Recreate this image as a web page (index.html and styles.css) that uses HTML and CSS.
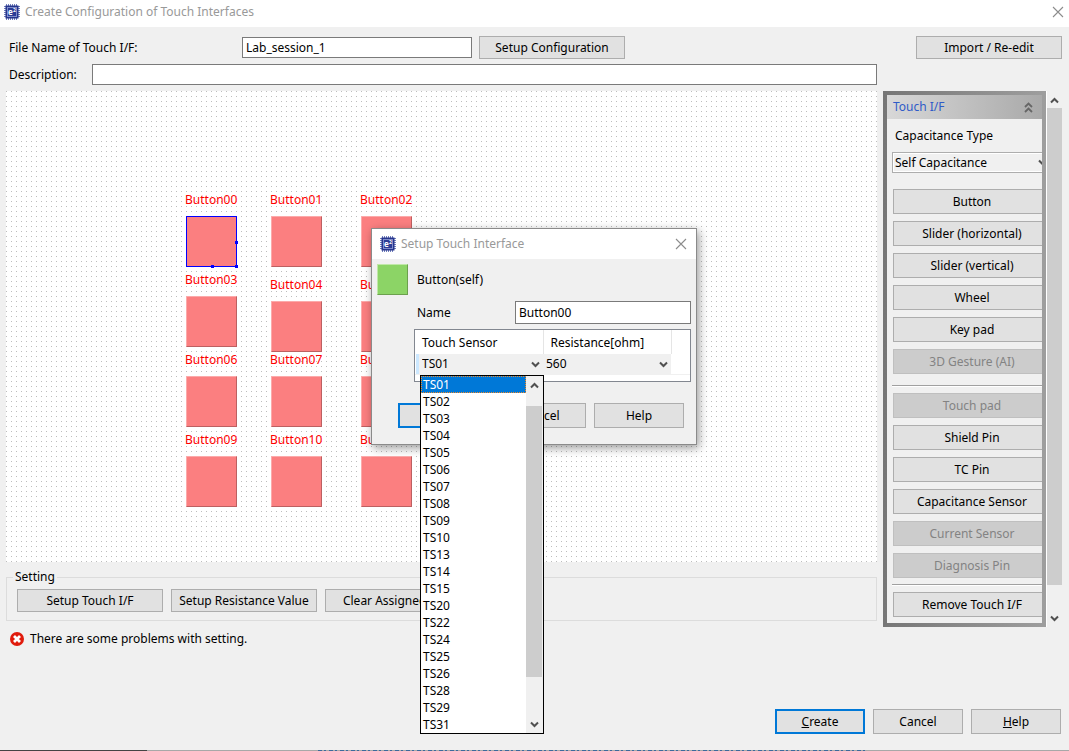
FILE: index.html
```html
<!DOCTYPE html>
<html lang="en">
<head>
<meta charset="utf-8">
<title>Create Configuration of Touch Interfaces</title>
<link rel="stylesheet" href="styles.css">
</head>
<body>
<svg class="defs" width="0" height="0" aria-hidden="true">
  <symbol id="close" viewBox="0 0 12 12"><path d="M1 1l10 10M11 1L1 11" fill="none" stroke="#8c8c8c" stroke-width="1.1"/></symbol>
  <symbol id="down" viewBox="0 0 9 7"><path d="M1 1.5l3.5 3.5L8 1.5" fill="none" stroke="#505050" stroke-width="2"/></symbol>
  <symbol id="up" viewBox="0 0 9 7"><path d="M1 5.5L4.5 2L8 5.5" fill="none" stroke="#505050" stroke-width="2"/></symbol>
</svg>

<header class="titlebar">
  <svg class="chip" viewBox="0 0 16 16" aria-hidden="true">
    <path d="M2.5 0v16M4.5 0v16M6.5 0v16M8.5 0v16M10.5 0v16M12.5 0v16M0 2.5h16M0 4.5h16M0 6.5h16M0 8.5h16M0 10.5h16M0 12.5h16" stroke="#6f7dbb"/>
    <rect x="1.5" y="1.5" width="13" height="13" fill="#26358c"/>
    <rect x="3.5" y="3.5" width="9" height="9" fill="#2c3c96" stroke="#7f8ccb"/>
    <text x="4" y="11" font-size="8">e</text>
    <text x="9" y="8" font-size="5">2</text>
  </svg>
  <h1 class="title">Create Configuration of Touch Interfaces</h1>
  <button class="close" aria-label="Close"><svg><use href="#close"/></svg></button>
</header>

<main class="window">
  <div class="row">
    <label class="file-label" for="file">File Name of Touch I/F:</label>
    <input class="field file" id="file" value="Lab_session_1">
    <button class="btn wide">Setup Configuration</button>
    <button class="btn wide push">Import / Re-edit</button>
  </div>
  <div class="row desc-row">
    <label class="desc-label" for="desc">Description:</label>
    <input class="field desc" id="desc">
  </div>

  <div class="work">
    <div class="left">
      <section class="canvas" aria-label="Layout">
        <div class="node c1 r1"><span>Button00</span><div class="pad selected"><i class="h-right"></i><i class="h-bottom"></i><i class="h-corner"></i></div></div>
        <div class="node c2 r1"><span>Button01</span><div class="pad"></div></div>
        <div class="node c3 r1"><span>Button02</span><div class="pad"></div></div>
        <div class="node c1 r2"><span>Button03</span><div class="pad"></div></div>
        <div class="node c2 r2 lower"><span>Button04</span><div class="pad"></div></div>
        <div class="node c3 r2 lower"><span>Button05</span><div class="pad"></div></div>
        <div class="node c1 r3"><span>Button06</span><div class="pad"></div></div>
        <div class="node c2 r3"><span>Button07</span><div class="pad"></div></div>
        <div class="node c3 r3"><span>Button08</span><div class="pad"></div></div>
        <div class="node c1 r4"><span>Button09</span><div class="pad"></div></div>
        <div class="node c2 r4"><span>Button10</span><div class="pad"></div></div>
        <div class="node c3 r4"><span>Button11</span><div class="pad"></div></div>
      </section>
      <fieldset class="setting">
        <legend>Setting</legend>
        <button class="btn wide">Setup Touch I/F</button>
        <button class="btn wide">Setup Resistance Value</button>
        <button class="btn wide">Clear Assigned Pins</button>
      </fieldset>
      <p class="problem">
        <svg viewBox="0 0 14 14"><circle cx="7" cy="7" r="7" fill="#e01b0c"/><path d="M4 4l6 6M10 4l-6 6" stroke="#fff" stroke-width="2.8"/></svg>
        There are some problems with setting.
      </p>
    </div>

    <div class="side">
      <aside class="palette">
        <div class="palette-in">
          <h2 class="palette-head">Touch I/F
            <svg viewBox="0 0 9 11"><path d="M1 5l3.5-3.5L8 5M1 10l3.5-3.5L8 10" fill="none" stroke="#666" stroke-width="1.8"/></svg>
          </h2>
          <div class="palette-body">
            <label for="cap">Capacitance Type</label>
            <div class="combo cap"><select id="cap"><option>Self Capacitance</option></select><svg><use href="#down"/></svg></div>
            <div class="group">
              <button class="btn">Button</button>
              <button class="btn">Slider (horizontal)</button>
              <button class="btn">Slider (vertical)</button>
              <button class="btn">Wheel</button>
              <button class="btn">Key pad</button>
              <button class="btn" disabled>3D Gesture (AI)</button>
            </div>
            <hr>
            <div class="group">
              <button class="btn" disabled>Touch pad</button>
              <button class="btn">Shield Pin</button>
              <button class="btn">TC Pin</button>
              <button class="btn">Capacitance Sensor</button>
              <button class="btn" disabled>Current Sensor</button>
              <button class="btn" disabled>Diagnosis Pin</button>
            </div>
            <hr class="tight">
            <div class="group"><button class="btn">Remove Touch I/F</button></div>
          </div>
        </div>
      </aside>
      <div class="scroll main-scroll">
        <svg><use href="#up"/></svg>
        <div class="thumb"></div>
        <svg><use href="#down"/></svg>
      </div>
    </div>
  </div>

  <footer class="actions">
    <button class="btn std primary"><u>C</u>reate</button>
    <button class="btn std">Cancel</button>
    <button class="btn std"><u>H</u>elp</button>
  </footer>
</main>
<div class="edge"><div class="edge-dark"></div><div class="edge-code"></div></div>

<section class="dialog" role="dialog" aria-labelledby="dlg-title">
  <header class="dlg-bar">
    <svg class="chip" viewBox="0 0 16 16" aria-hidden="true">
      <path d="M2.5 0v16M4.5 0v16M6.5 0v16M8.5 0v16M10.5 0v16M12.5 0v16M0 2.5h16M0 4.5h16M0 6.5h16M0 8.5h16M0 10.5h16M0 12.5h16" stroke="#6f7dbb"/>
      <rect x="1.5" y="1.5" width="13" height="13" fill="#26358c"/>
      <rect x="3.5" y="3.5" width="9" height="9" fill="#2c3c96" stroke="#7f8ccb"/>
      <text x="4" y="11" font-size="8">e</text>
      <text x="9" y="8" font-size="5">2</text>
    </svg>
    <h2 class="title" id="dlg-title">Setup Touch Interface</h2>
    <button class="close" aria-label="Close dialog"><svg><use href="#close"/></svg></button>
  </header>
  <div class="dlg-kind"><div class="swatch"></div>Button(self)</div>
  <div class="dlg-form">
    <div class="dlg-name"><label for="name">Name</label><input class="field" id="name" value="Button00"></div>
    <div class="grid-box">
      <table>
        <thead><tr><th>Touch Sensor</th><th>Resistance[ohm]</th><th></th></tr></thead>
        <tbody><tr>
          <td class="sensor"><div class="combo flat"><select aria-label="Touch Sensor"><option>TS01</option></select><svg><use href="#down"/></svg></div></td>
          <td><div class="combo flat"><select aria-label="Resistance"><option>560</option></select><svg><use href="#down"/></svg></div></td>
          <td></td>
        </tr></tbody>
      </table>
    </div>
  </div>
  <div class="dlg-actions">
    <button class="btn std primary">OK</button>
    <button class="btn std">Cancel</button>
    <button class="btn std">Help</button>
  </div>
  <div class="popup">
    <ul role="listbox" aria-label="Touch Sensor">
      <li role="option" aria-selected="true">TS01</li>
      <li role="option">TS02</li><li role="option">TS03</li><li role="option">TS04</li>
      <li role="option">TS05</li><li role="option">TS06</li><li role="option">TS07</li>
      <li role="option">TS08</li><li role="option">TS09</li><li role="option">TS10</li>
      <li role="option">TS13</li><li role="option">TS14</li><li role="option">TS15</li>
      <li role="option">TS20</li><li role="option">TS22</li><li role="option">TS24</li>
      <li role="option">TS25</li><li role="option">TS26</li><li role="option">TS28</li>
      <li role="option">TS29</li><li role="option">TS31</li>
    </ul>
    <div class="scroll list-scroll">
      <svg><use href="#up"/></svg>
      <div class="thumb"></div>
      <svg><use href="#down"/></svg>
    </div>
  </div>
</section>
</body>
</html>
```
FILE: styles.css
```css
* { box-sizing: border-box; }
body {
  margin: 0;
  min-height: 100vh;
  display: flex;
  flex-direction: column;
  position: relative;
  background: #f0f0f0;
  color: #000;
  font: 12px/16px "Noto Sans", sans-serif;
}
button, input, select { font: inherit; color: inherit; border-radius: 0; margin: 0; }
h1, h2, p, ul { margin: 0; padding: 0; font: inherit; }
.defs { position: absolute; }

.titlebar { display: flex; align-items: center; height: 27px; padding: 0 5px 4px 4px; background: #fff; }
.chip { width: 16px; height: 16px; flex: none; }
.chip text { fill: #fff; font-family: "Open Sans", sans-serif; font-weight: 700; }
.title { flex: 1; margin-left: 5px; color: #999; }
.close { display: flex; padding: 0; border: 0; background: none; }
.close svg { width: 12px; height: 12px; }

.window { flex: 1; display: flex; flex-direction: column; padding: 9px 7px 0 6px; }
.row { display: flex; align-items: center; height: 23px; padding-left: 3px; }
.file-label { width: 233px; }
.field { height: 21px; min-width: 0; padding: 0 3px; border: 1px solid #7a7a7a; background: #fff; }
.file { width: 230px; margin-right: 7px; }
.btn { height: 23px; padding: 0; border: 1px solid #adadad; background: #e1e1e1; text-align: center; white-space: nowrap; }
.btn:disabled { background: #ccc; border-color: #bfbfbf; color: #838383; }
.wide { width: 146px; }
.push { margin-left: auto; }
.desc-row { margin-top: 4px; padding-right: 185px; }
.desc-label { width: 83px; }
.desc { flex: 1; }

.work { display: flex; align-items: flex-start; margin-top: 5px; }
.left { flex: 1; min-width: 0; }
.canvas {
  position: relative;
  height: 471px;
  background: conic-gradient(from 270deg at 1px 1px, #bdbdbd 90deg, #fff 0) 0 0 / 5px 5px;
}
.node { position: absolute; width: 51px; color: #f00; }
.node span { display: block; height: 24px; margin-left: -1px; }
.c1 { left: 180px; }
.c2 { left: 265px; }
.c3 { left: 355px; }
.r1 { top: 101px; }
.r2 { top: 181px; }
.r2.lower { top: 186px; }
.r3 { top: 261px; }
.r4 { top: 341px; }
.pad { position: relative; height: 51px; background: #fb7f80; border: 1px solid; border-color: #fcaaaa #bc6061 #bc6061 #fcaaaa; }
.pad.selected { border-color: #00f; }
.pad i { position: absolute; width: 3px; height: 3px; background: #00f; }
.h-right { right: -2px; top: 24px; }
.h-bottom { bottom: -2px; left: 24px; }
.h-corner { right: -2px; bottom: -2px; }

.setting { display: flex; gap: 8px; height: 52px; margin: 7px 0 0; padding: 4px 10px; border: 1px solid #dcdcdc; min-width: 0; }
.setting legend { padding: 0 2px; margin-left: -4px; }
.problem { display: flex; align-items: center; gap: 6px; margin-top: 10px; padding-left: 4px; }
.problem svg { width: 14px; height: 14px; }

.side { display: flex; margin-left: 6px; }
.palette { width: 163px; padding: 4px; background: linear-gradient(90deg, #767676, #9e9e9e); }
.palette-in { overflow: hidden; background: #f0f0f0; }
.palette-head {
  display: flex; align-items: center; justify-content: space-between;
  height: 24px; padding: 0 9px 0 6px;
  color: #2f5bc8; background: linear-gradient(90deg, #d8d8d8, #a9a9a9);
}
.palette-head svg { width: 9px; height: 11px; }
.palette-body { width: 165px; padding: 9px 1px 6px 5px; }
.palette-body label { display: block; padding-left: 3px; }
.combo { position: relative; display: flex; align-items: center; }
.combo select { appearance: none; width: 100%; border: 0; background: none; padding: 0 2px; outline: 0; }
.combo svg { position: absolute; right: 3px; width: 9px; height: 7px; pointer-events: none; }
.cap { height: 21px; margin-top: 8px; border: 1px solid #adadad; box-shadow: inset 0 0 0 1px #fff; }
.group { display: flex; flex-direction: column; gap: 7px; padding-left: 1px; }
.cap + .group { margin-top: 16px; }
.group .btn { height: 25px; }
hr { height: 2px; margin: 11px 0 6px; border: 0; border-top: 1px solid #a0a0a0; border-bottom: 1px solid #fff; }
hr.tight { margin-top: 6px; }

.scroll { display: flex; flex-direction: column; align-items: center; background: #f0f0f0; }
.scroll svg { width: 9px; height: 7px; flex: none; }
.thumb { width: 100%; background: #cdcdcd; }
.main-scroll { width: 16px; padding: 6px 0 5px; border-left: 1px solid #fff; }
.main-scroll .thumb { flex: 1; margin: 4px 0 30px; }

.actions { display: flex; justify-content: flex-end; gap: 8px; margin-top: auto; padding: 0 1px 16px; }
.std { width: 90px; height: 25px; }
.primary { border: 2px solid #0078d7; }
.edge { display: flex; height: 1px; background: #a8a8a8; }
.edge-dark { width: 147px; background: #444; }
.edge-code { width: 547px; margin-left: 171px; background: repeating-linear-gradient(90deg, #3b6a9c 0 4px, #a8a8a8 4px 6px, #3b6a9c 6px 8px, #a8a8a8 8px 11px); }

.dialog {
  position: absolute; left: 371px; top: 228px; width: 326px;
  border: 1px solid #8a8a8a; background: #f0f0f0;
  box-shadow: 2px 3px 9px rgba(0, 0, 0, .4);
}
.dlg-bar { display: flex; align-items: center; height: 30px; padding: 0 9px 1px 8px; background: #fff; }
.dlg-kind { display: flex; align-items: center; gap: 9px; padding: 5px; }
.swatch { width: 31px; height: 31px; background: #8cd466; border: 1px solid; border-color: #c0e8a8 #6ca04e #6ca04e #c0e8a8; }
.dlg-form { display: flex; flex-direction: column; gap: 5px; padding: 1px 5px 0 42px; }
.dlg-name { display: flex; align-items: center; padding-left: 3px; }
.dlg-name label { width: 98px; }
.dlg-name .field { flex: 1; height: 23px; }
.grid-box { height: 53px; background: #fff; border: 1px solid #828790; }
table { width: 100%; table-layout: fixed; border-collapse: collapse; }
th { height: 24px; padding: 2px 7px 0; font-weight: 400; text-align: left; border-right: 1px solid #e5e5e5; }
th:nth-child(-n+2) { width: 128px; }
th:last-child { border: 0; }
td { padding: 0; border-bottom: 1px solid #f0f0f0; }
.sensor { padding-left: 4px; background: linear-gradient(#cce8ff, #cce8ff) 1px 0 / 3px 100% no-repeat; }
.flat { height: 20px; background: #f0f0f0; }
.flat select { padding: 0 3px; }
.dlg-actions { display: flex; gap: 8px; padding: 21px 12px 16px 26px; }

.popup { position: absolute; left: 48px; top: 146px; width: 124px; display: flex; border: 1px solid #000; background: #fff; }
.popup ul { flex: 1; list-style: none; }
.popup li { height: 17px; padding: 1px 2px 0; }
.popup li[aria-selected] { color: #fff; background: #0078d7; outline: 1px dotted #f08a28; outline-offset: -1px; }
.list-scroll { width: 17px; padding: 6px 1px 5px 0; }
.list-scroll .thumb { height: 271px; margin: 17px 0 auto; }
```
